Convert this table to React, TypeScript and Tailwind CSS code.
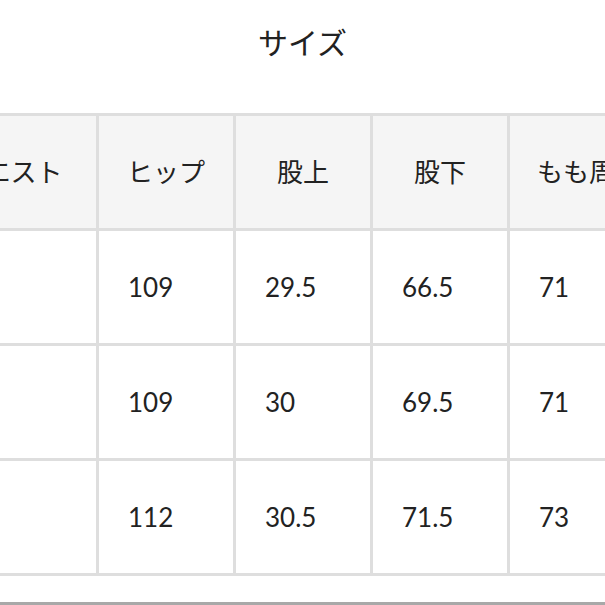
const HEADERS = ["ウエスト", "ヒップ", "股上", "股下", "もも周り", "裾幅"];

const ROWS = [
  ["", "109", "29.5", "66.5", "71", "21"],
  ["", "109", "30", "69.5", "71", "21"],
  ["", "112", "30.5", "71.5", "73", "22"],
];

function Cell({ text, head }: { text: string; head?: boolean }) {
  return (
    <div
      className={`flex h-[112px] items-center whitespace-nowrap text-[26px] text-[#222] ${
        head ? "justify-center bg-[#f5f5f5]" : "bg-white pl-[29px]"
      }`}
    >
      {text}
    </div>
  );
}

export default function App() {
  return (
    <div className="h-[605px] w-[605px] overflow-hidden bg-white font-['Lato','Noto_Sans_CJK_JP',sans-serif]">
      <div className="flex h-[113px] justify-center pt-[21px]">
        <h2 className="text-[30px] leading-[42px] font-normal text-[#222]">サイズ</h2>
      </div>
      <div className="ml-[-78px] grid w-max grid-cols-[171px_134px_134px_134px_158px_134px] gap-[3px] bg-[#dedede] p-[3px]">
        {HEADERS.map((h) => (
          <Cell key={h} text={h} head />
        ))}
        {ROWS.map((row, i) =>
          row.map((v, j) => <Cell key={`${i}-${j}`} text={v} />)
        )}
      </div>
      <div className="mt-[26px] h-[3px] bg-[#a8a8a8]" />
    </div>
  );
}
